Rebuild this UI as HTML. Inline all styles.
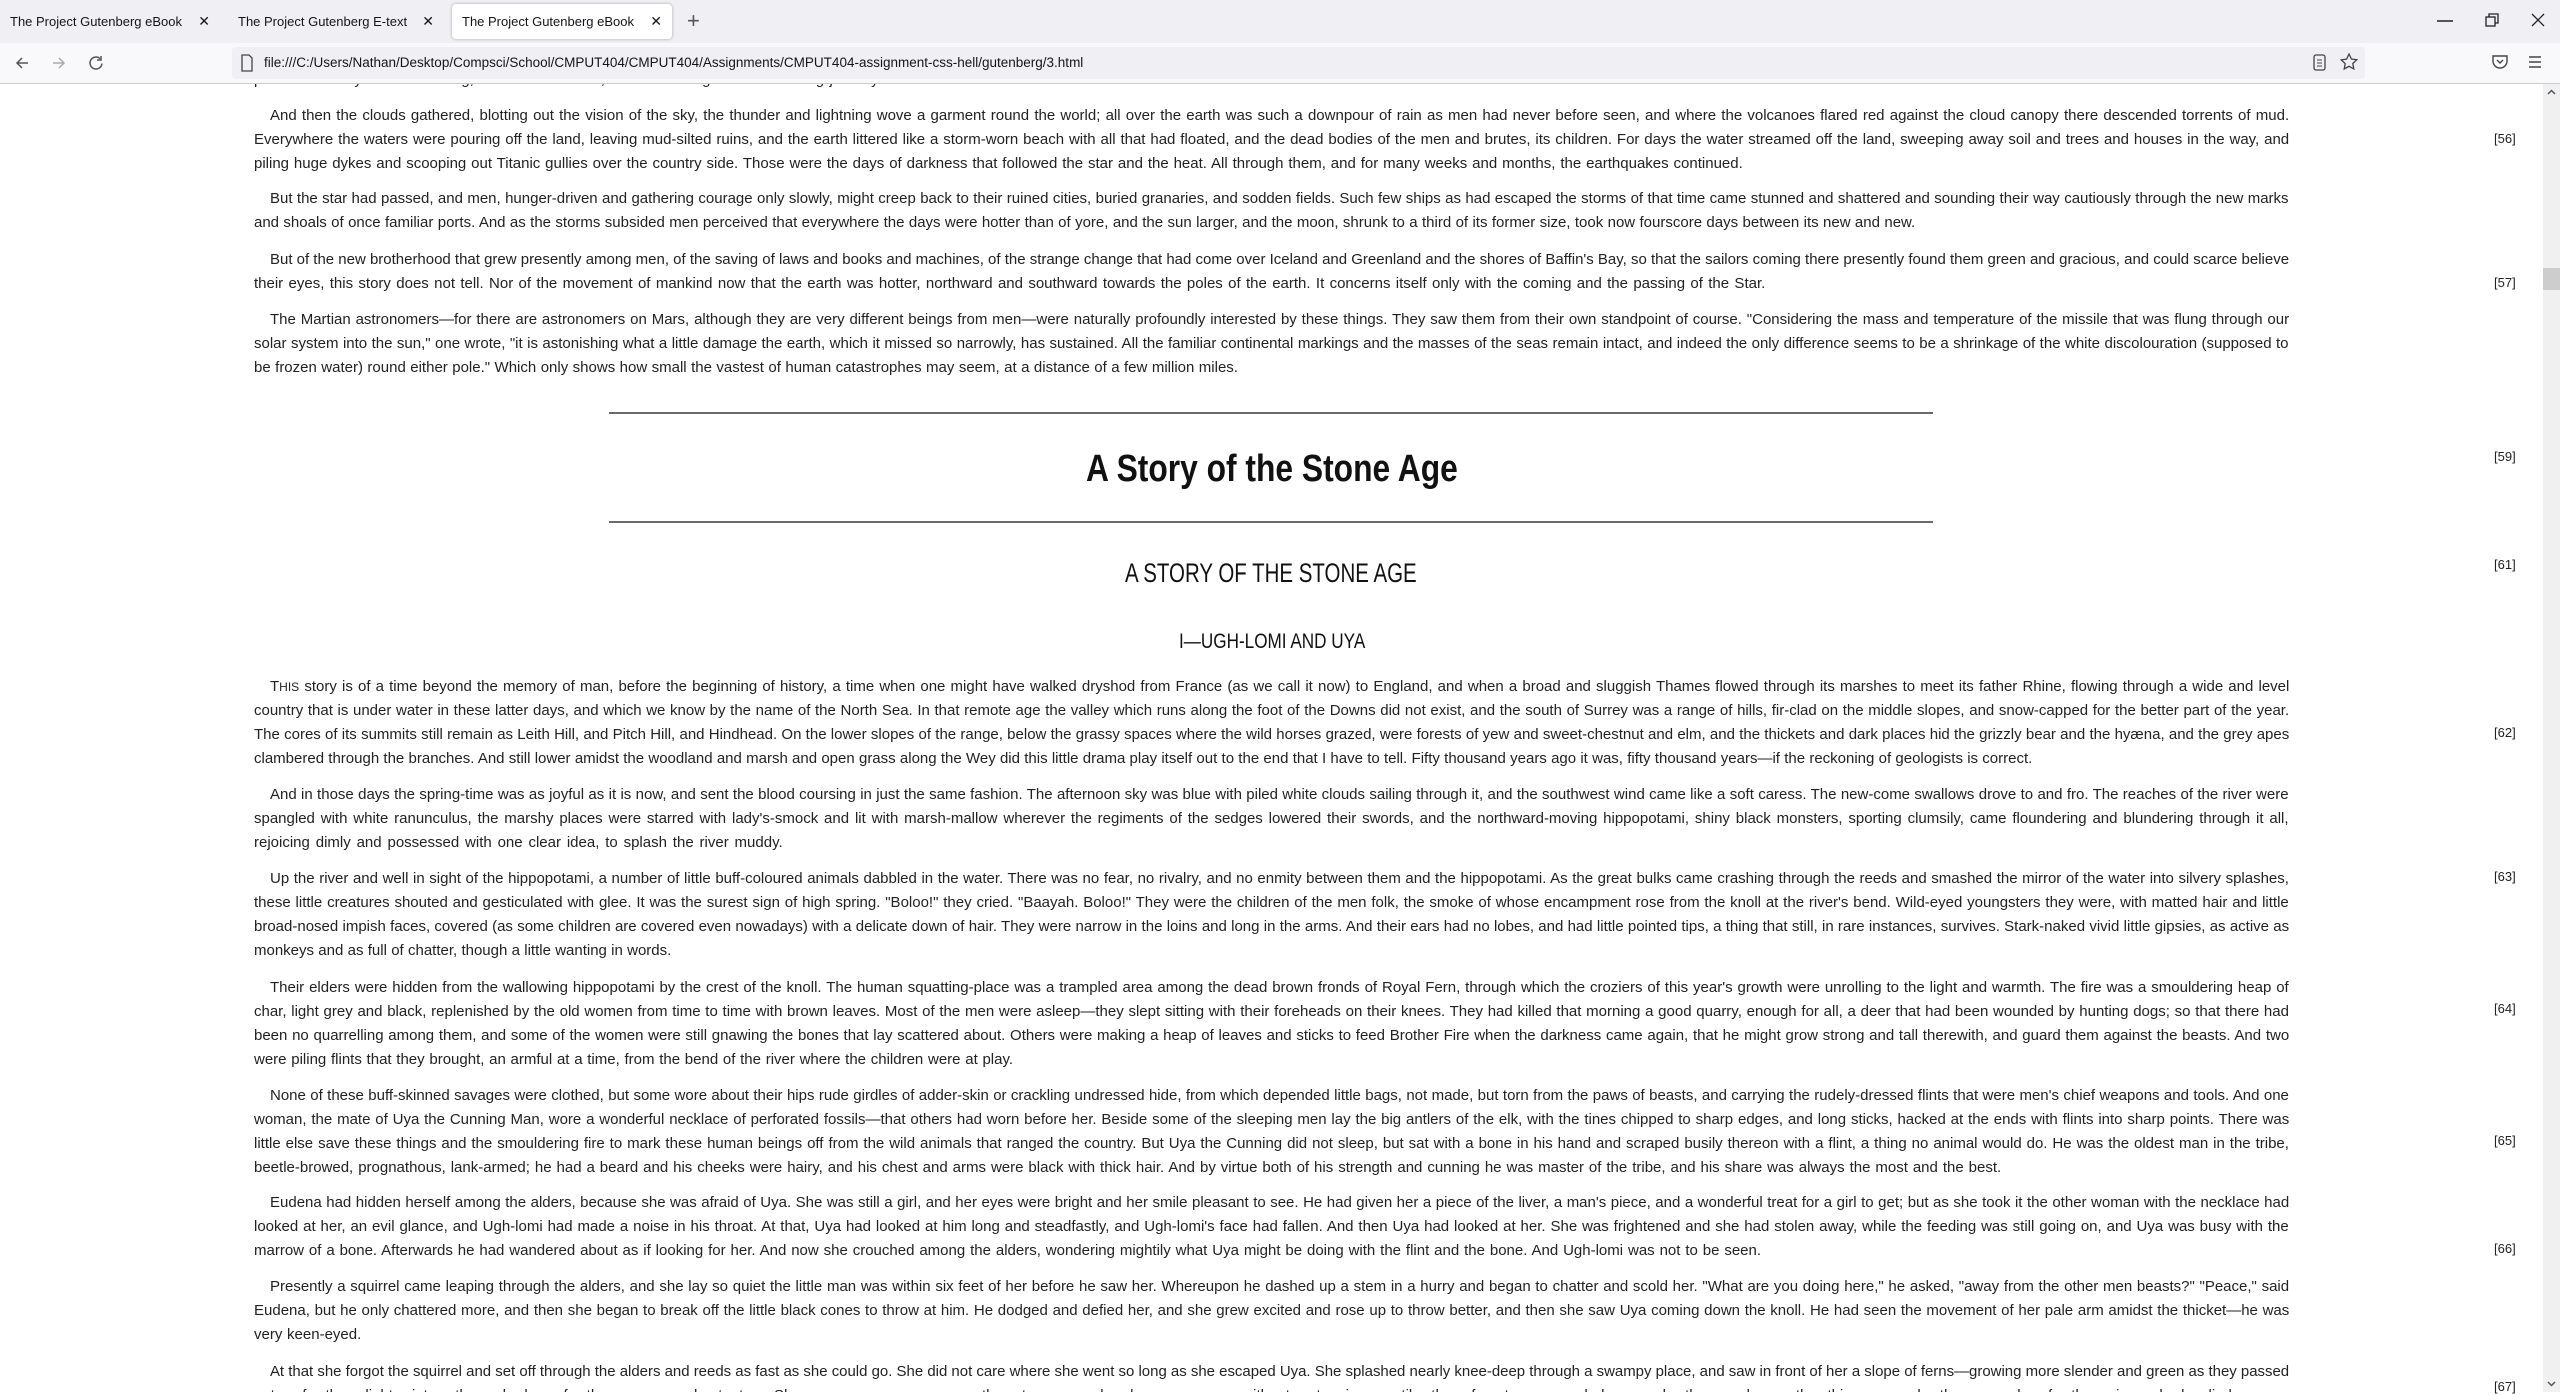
<!DOCTYPE html>
<html><head><meta charset="utf-8">
<style>
*{margin:0;padding:0;box-sizing:border-box}
html,body{width:2560px;height:1392px;overflow:hidden;background:#fff;font-family:"Liberation Sans Narrow","Liberation Sans",sans-serif;color:#222}
#tabs{position:absolute;left:0;top:0;width:2560px;height:43px;background:#f0f0f4}
.tab{position:absolute;top:4px;height:35px;font-size:13px;line-height:35px;color:#15141a;white-space:nowrap;overflow:hidden;padding-left:10px}
.tab .t{display:block;width:calc(100% - 34px);overflow:hidden}
.tab .x{position:absolute;right:10px;top:0;font-size:14px}
.tab.act{background:#fff;border-radius:4px;box-shadow:0 0 3px rgba(0,0,0,.3)}
#tool{position:absolute;left:0;top:43px;width:2560px;height:41px;background:#f9f9fb;border-bottom:1px solid #ccc}
#url{position:absolute;left:232px;top:4px;width:2133px;height:32px;background:#f0f0f4;border-radius:4px;font-size:13.5px;line-height:32px;padding-left:32px;color:#15141a}
.ico{position:absolute}
.l{position:absolute;left:254px;height:24px;line-height:24px;font-size:15px;white-space:nowrap;transform-origin:0 50%}
.pn{position:absolute;left:2494px;font-size:13px;line-height:16px;color:#222}
.hr{position:absolute;left:609px;width:1324px;height:2px;background:#6a6a6a}
.h{position:absolute;white-space:nowrap;transform-origin:0 50%;color:#111}
#sb{position:absolute;left:2543px;top:84px;width:17px;height:1308px;background:#f0f0f0}
</style></head><body>
<div id="tabs">
<div class="tab" style="left:0;width:220px"><span class="t">The Project Gutenberg eBook of The Time</span><span class="x">✕</span></div>
<div class="tab" style="left:228px;width:216px"><span class="t">The Project Gutenberg E-text of A Preface</span><span class="x">✕</span></div>
<div class="tab act" style="left:452px;width:220px"><span class="t">The Project Gutenberg eBook of Tales</span><span class="x">✕</span></div>
<div style="position:absolute;left:687px;top:8px;font-size:22px;color:#555">+</div>
<svg class="ico" style="left:2435px;top:14px" width="20" height="14"><line x1="2" y1="7" x2="18" y2="7" stroke="#222" stroke-width="1.5"/></svg>
<svg class="ico" style="left:2484px;top:12px" width="16" height="16"><rect x="2" y="5" width="9" height="9" fill="none" stroke="#222" stroke-width="1.3"/><path d="M5 5V2h9v9h-3" fill="none" stroke="#222" stroke-width="1.3"/></svg>
<svg class="ico" style="left:2530px;top:12px" width="16" height="16"><path d="M2 2L14 14M14 2L2 14" stroke="#222" stroke-width="1.3"/></svg>
</div>
<div id="tool">
<svg class="ico" style="left:14px;top:12px" width="16" height="16"><path d="M14 8H3M8 3L3 8l5 5" fill="none" stroke="#555" stroke-width="1.5"/></svg>
<svg class="ico" style="left:51px;top:12px" width="16" height="16"><path d="M2 8h11M8 3l5 5-5 5" fill="none" stroke="#aaa" stroke-width="1.5"/></svg>
<svg class="ico" style="left:88px;top:12px" width="16" height="16"><path d="M12 3.5A6 6 0 1 0 14 8.5" fill="none" stroke="#555" stroke-width="1.5"/><path d="M13 1v4H9" fill="none" stroke="#555" stroke-width="1.5"/></svg>
<div id="url">file:///C:/Users/Nathan/Desktop/Compsci/School/CMPUT404/CMPUT404/Assignments/CMPUT404-assignment-css-hell/gutenberg/3.html</div>
<svg class="ico" style="left:240px;top:11px" width="14" height="18"><path d="M2 1h7l3 3v13H2z" fill="none" stroke="#444" stroke-width="1.3"/></svg>
<svg class="ico" style="left:2313px;top:10px" width="14" height="20"><rect x="1" y="2" width="11" height="15" rx="2" fill="none" stroke="#444" stroke-width="1.3"/><path d="M4 7h5M4 10h5M4 13h5" stroke="#444"/></svg>
<svg class="ico" style="left:2339px;top:9px" width="20" height="20"><path d="M10 2l2.4 5 5.4.7-4 3.8 1 5.4L10 14.3 5.2 17l1-5.4-4-3.8 5.4-.7z" fill="none" stroke="#444" stroke-width="1.3"/></svg>
<svg class="ico" style="left:2491px;top:10px" width="18" height="18"><path d="M2 3h14v5a7 7 0 0 1-14 0z" fill="none" stroke="#444" stroke-width="1.4"/><path d="M6 7l3 3 3-3" fill="none" stroke="#444" stroke-width="1.4"/></svg>
<svg class="ico" style="left:2527px;top:11px" width="16" height="16"><path d="M2 3h12M2 8h12M2 13h12" stroke="#444" stroke-width="1.4"/></svg>
</div>
<div id="sb"><svg style="position:absolute;left:4px;top:5px" width="9" height="6"><path d="M1 5l3.5-3.5L8 5" fill="none" stroke="#555" stroke-width="1.5"/></svg>
<div style="position:absolute;left:0;top:184px;width:17px;height:22px;background:#cdcdcd"></div>
<svg style="position:absolute;left:4px;top:1297px" width="9" height="6"><path d="M1 1l3.5 3.5L8 1" fill="none" stroke="#555" stroke-width="1.5"/></svg></div>

<div style="position:absolute;left:0;top:84px;width:2543px;height:1308px;overflow:hidden">
<div id="content" style="position:absolute;left:0;top:-84px"></div>
</div>

<div class="hr" style="top:412px"></div>
<div class="h" style="top:447px;font-family:'Liberation Sans',sans-serif;font-weight:bold;font-size:38px;line-height:44px" data-l="1086" data-w="372">A Story of the Stone Age</div>
<div class="hr" style="top:521px"></div>
<div class="h" style="top:558px;font-size:27px;line-height:30px" data-l="1125" data-w="292">A STORY OF THE STONE AGE</div>
<div class="h" style="top:630px;font-size:21px;line-height:24px" data-l="1179" data-w="186">I—UGH-LOMI AND UYA</div>

<div class="pn" style="top:131px">[56]</div>
<div class="pn" style="top:275px">[57]</div>
<div class="pn" style="top:449px">[59]</div>
<div class="pn" style="top:557px">[61]</div>
<div class="pn" style="top:725px">[62]</div>
<div class="pn" style="top:869px">[63]</div>
<div class="pn" style="top:1001px">[64]</div>
<div class="pn" style="top:1133px">[65]</div>
<div class="pn" style="top:1241px">[66]</div>
<div class="pn" style="top:1379px">[67]</div>

<script>
var P=[
[68,["passed. Already it was receding, swifter and swifter, in the last stage of its headlong journey downward into the sun."],1],
[104,["And then the clouds gathered, blotting out the vision of the sky, the thunder and lightning wove a garment round the world; all over the earth was such a downpour of rain as men had never before seen, and where the volcanoes flared red against the cloud canopy there descended torrents of mud.",
"Everywhere the waters were pouring off the land, leaving mud-silted ruins, and the earth littered like a storm-worn beach with all that had floated, and the dead bodies of the men and brutes, its children. For days the water streamed off the land, sweeping away soil and trees and houses in the way, and",
"piling huge dykes and scooping out Titanic gullies over the country side. Those were the days of darkness that followed the star and the heat. All through them, and for many weeks and months, the earthquakes continued."]],
[187,["But the star had passed, and men, hunger-driven and gathering courage only slowly, might creep back to their ruined cities, buried granaries, and sodden fields. Such few ships as had escaped the storms of that time came stunned and shattered and sounding their way cautiously through the new marks",
"and shoals of once familiar ports. And as the storms subsided men perceived that everywhere the days were hotter than of yore, and the sun larger, and the moon, shrunk to a third of its former size, took now fourscore days between its new and new."]],
[248,["But of the new brotherhood that grew presently among men, of the saving of laws and books and machines, of the strange change that had come over Iceland and Greenland and the shores of Baffin's Bay, so that the sailors coming there presently found them green and gracious, and could scarce believe",
"their eyes, this story does not tell. Nor of the movement of mankind now that the earth was hotter, northward and southward towards the poles of the earth. It concerns itself only with the coming and the passing of the Star."]],
[308,["The Martian astronomers—for there are astronomers on Mars, although they are very different beings from men—were naturally profoundly interested by these things. They saw them from their own standpoint of course. \"Considering the mass and temperature of the missile that was flung through our",
"solar system into the sun,\" one wrote, \"it is astonishing what a little damage the earth, which it missed so narrowly, has sustained. All the familiar continental markings and the masses of the seas remain intact, and indeed the only difference seems to be a shrinkage of the white discolouration (supposed to",
"be frozen water) round either pole.\" Which only shows how small the vastest of human catastrophes may seem, at a distance of a few million miles."]],
[675,["T<span style='font-size:12px'>HIS</span> story is of a time beyond the memory of man, before the beginning of history, a time when one might have walked dryshod from France (as we call it now) to England, and when a broad and sluggish Thames flowed through its marshes to meet its father Rhine, flowing through a wide and level",
"country that is under water in these latter days, and which we know by the name of the North Sea. In that remote age the valley which runs along the foot of the Downs did not exist, and the south of Surrey was a range of hills, fir-clad on the middle slopes, and snow-capped for the better part of the year.",
"The cores of its summits still remain as Leith Hill, and Pitch Hill, and Hindhead. On the lower slopes of the range, below the grassy spaces where the wild horses grazed, were forests of yew and sweet-chestnut and elm, and the thickets and dark places hid the grizzly bear and the hyæna, and the grey apes",
"clambered through the branches. And still lower amidst the woodland and marsh and open grass along the Wey did this little drama play itself out to the end that I have to tell. Fifty thousand years ago it was, fifty thousand years—if the reckoning of geologists is correct."]],
[783,["And in those days the spring-time was as joyful as it is now, and sent the blood coursing in just the same fashion. The afternoon sky was blue with piled white clouds sailing through it, and the southwest wind came like a soft caress. The new-come swallows drove to and fro. The reaches of the river were",
"spangled with white ranunculus, the marshy places were starred with lady's-smock and lit with marsh-mallow wherever the regiments of the sedges lowered their swords, and the northward-moving hippopotami, shiny black monsters, sporting clumsily, came floundering and blundering through it all,",
"rejoicing dimly and possessed with one clear idea, to splash the river muddy."]],
[867,["Up the river and well in sight of the hippopotami, a number of little buff-coloured animals dabbled in the water. There was no fear, no rivalry, and no enmity between them and the hippopotami. As the great bulks came crashing through the reeds and smashed the mirror of the water into silvery splashes,",
"these little creatures shouted and gesticulated with glee. It was the surest sign of high spring. \"Boloo!\" they cried. \"Baayah. Boloo!\" They were the children of the men folk, the smoke of whose encampment rose from the knoll at the river's bend. Wild-eyed youngsters they were, with matted hair and little",
"broad-nosed impish faces, covered (as some children are covered even nowadays) with a delicate down of hair. They were narrow in the loins and long in the arms. And their ears had no lobes, and had little pointed tips, a thing that still, in rare instances, survives. Stark-naked vivid little gipsies, as active as",
"monkeys and as full of chatter, though a little wanting in words."]],
[976,["Their elders were hidden from the wallowing hippopotami by the crest of the knoll. The human squatting-place was a trampled area among the dead brown fronds of Royal Fern, through which the croziers of this year's growth were unrolling to the light and warmth. The fire was a smouldering heap of",
"char, light grey and black, replenished by the old women from time to time with brown leaves. Most of the men were asleep—they slept sitting with their foreheads on their knees. They had killed that morning a good quarry, enough for all, a deer that had been wounded by hunting dogs; so that there had",
"been no quarrelling among them, and some of the women were still gnawing the bones that lay scattered about. Others were making a heap of leaves and sticks to feed Brother Fire when the darkness came again, that he might grow strong and tall therewith, and guard them against the beasts. And two",
"were piling flints that they brought, an armful at a time, from the bend of the river where the children were at play."]],
[1084,["None of these buff-skinned savages were clothed, but some wore about their hips rude girdles of adder-skin or crackling undressed hide, from which depended little bags, not made, but torn from the paws of beasts, and carrying the rudely-dressed flints that were men's chief weapons and tools. And one",
"woman, the mate of Uya the Cunning Man, wore a wonderful necklace of perforated fossils—that others had worn before her. Beside some of the sleeping men lay the big antlers of the elk, with the tines chipped to sharp edges, and long sticks, hacked at the ends with flints into sharp points. There was",
"little else save these things and the smouldering fire to mark these human beings off from the wild animals that ranged the country. But Uya the Cunning did not sleep, but sat with a bone in his hand and scraped busily thereon with a flint, a thing no animal would do. He was the oldest man in the tribe,",
"beetle-browed, prognathous, lank-armed; he had a beard and his cheeks were hairy, and his chest and arms were black with thick hair. And by virtue both of his strength and cunning he was master of the tribe, and his share was always the most and the best."]],
[1191,["Eudena had hidden herself among the alders, because she was afraid of Uya. She was still a girl, and her eyes were bright and her smile pleasant to see. He had given her a piece of the liver, a man's piece, and a wonderful treat for a girl to get; but as she took it the other woman with the necklace had",
"looked at her, an evil glance, and Ugh-lomi had made a noise in his throat. At that, Uya had looked at him long and steadfastly, and Ugh-lomi's face had fallen. And then Uya had looked at her. She was frightened and she had stolen away, while the feeding was still going on, and Uya was busy with the",
"marrow of a bone. Afterwards he had wandered about as if looking for her. And now she crouched among the alders, wondering mightily what Uya might be doing with the flint and the bone. And Ugh-lomi was not to be seen."]],
[1275,["Presently a squirrel came leaping through the alders, and she lay so quiet the little man was within six feet of her before he saw her. Whereupon he dashed up a stem in a hurry and began to chatter and scold her. \"What are you doing here,\" he asked, \"away from the other men beasts?\" \"Peace,\" said",
"Eudena, but he only chattered more, and then she began to break off the little black cones to throw at him. He dodged and defied her, and she grew excited and rose up to throw better, and then she saw Uya coming down the knoll. He had seen the movement of her pale arm amidst the thicket—he was",
"very keen-eyed."]],
[1360,["At that she forgot the squirrel and set off through the alders and reeds as fast as she could go. She did not care where she went so long as she escaped Uya. She splashed nearly knee-deep through a swampy place, and saw in front of her a slope of ferns—growing more slender and green as they passed",
"out of the light into the shade of the young chestnuts. She was soon among the trees, and she ran on without stopping until the forest grew darker and the undergrowth thinner, and the sound of the river had died away."],2]
];
var c=document.getElementById('content'),h='';
P.forEach(function(p,pi){p[1].forEach(function(t,i){var last=(i==p[1].length-1)&&p[2]!==2;
h+='<div class="l'+(last?' last':'')+'" data-p="'+pi+'" style="top:'+(p[0]+i*24)+'px;'+(i==0&&p[2]!==1?'padding-left:16px;':'')+'">'+t+'</div>';});});
c.innerHTML=h;
var ws={},all=[];
document.querySelectorAll('.l').forEach(function(d){
if(d.classList.contains('last'))return;
var w=d.scrollWidth,sp=(d.textContent.match(/ /g)||[]).length;
if(w<2035&&sp){var s=(2035-w)/sp;d.style.wordSpacing=s+'px';ws[d.dataset.p]=s;all.push(s);}
else if(w>2035){d.style.transform='scaleX('+(2035/w)+')';}
});
var avg=all.length?all.reduce(function(a,b){return a+b},0)/all.length:0;
document.querySelectorAll('.l.last').forEach(function(d){
var s=ws[d.dataset.p];if(s===undefined)s=avg;d.style.wordSpacing=s+'px';
if(d.scrollWidth>2035)d.style.transform='scaleX('+(2035/d.scrollWidth)+')';
});
document.querySelectorAll('.h').forEach(function(d){var l=+d.dataset.l,t=+d.dataset.w;d.style.left=l+'px';var w=d.scrollWidth;d.style.transform='scaleX('+(t/w)+')';});
</script>
</body></html>
